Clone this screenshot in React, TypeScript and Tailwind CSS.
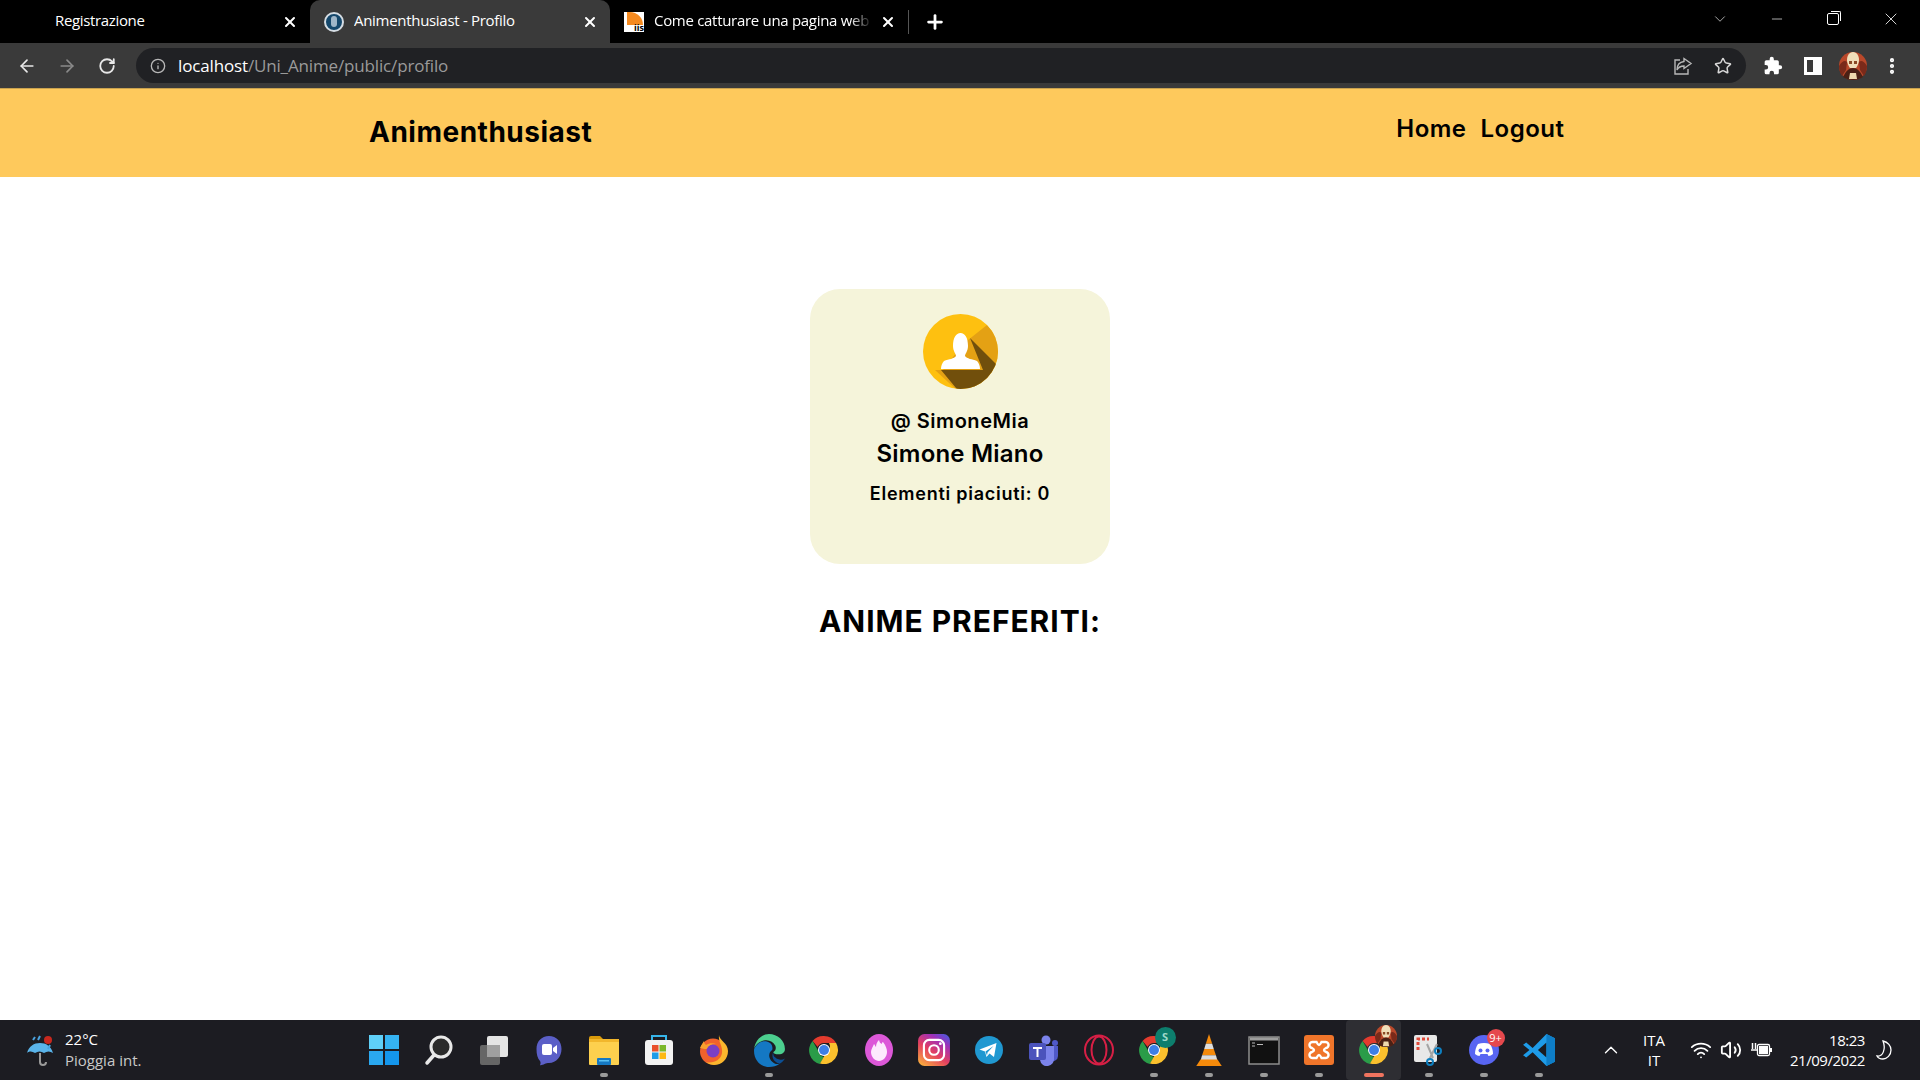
import { ArrowLeft, ArrowRight, ChevronDown, ChevronUp, Info, MoreVertical, Minus, Plus, RotateCw, Star, Volume2, Wifi, X } from 'lucide-react';
import type { ReactNode } from 'react';

const UI = { fontFamily: '"Open Sans", "Noto Sans", sans-serif' };

function Ico({ children, size = 32 }: { children: ReactNode; size?: number }) {
	return (
		<svg width={size} height={size} viewBox="0 0 32 32" fill="none">
			{children}
		</svg>
	);
}

const ChromeLogo = () => (
	<Ico>
		<path d="M16 2a14 14 0 0 1 12.100 7H16a7 7 0 0 0-6.300 4L4.600 7A14 14 0 0 1 16 2z" fill="#e33b2e" />
		<path d="M4.600 7l6 10.500A7 7 0 0 0 16 23l-4 7A14 14 0 0 1 4.600 7z" fill="#2a9c48" />
		<path d="M28.100 9A14 14 0 0 1 12 29.500l6.200-10.700A7 7 0 0 0 21 9z" fill="#fbc02d" />
		<circle cx="16" cy="16" r="6" fill="#fff" />
		<circle cx="16" cy="16" r="5" fill="#3d7fe6" />
	</Ico>
);

const Portrait = ({ size }: { size: number }) => (
	<svg width={size} height={size} viewBox="0 0 28 28">
		<circle cx="14" cy="14" r="14" fill="#b9482a" />
		<path d="M0 14c3-5 6-6 8-4l-1 8-4 6c-2-3-3-6-3-10zM28 14c-3-5-6-6-8-4l1 8 4 6c2-3 3-6 3-10z" fill="#7a2a1a" />
		<path d="M14 0c4 0 6 4 6 8 0 3-2 7-3 8h-6c-1-1-3-5-3-8 0-4 2-8 6-8z" fill="#f0dfba" />
		<path d="M10 9h3v3h-3zM15 9h3v3h-3z" fill="#8a4a25" />
		<path d="M4 25c3-6 6-9 10-9s7 3 10 9c-3 2-6 3-10 3s-7-1-10-3z" fill="#4a2015" />
		<path d="M11 21h6l1 6h-8z" fill="#eed9ae" />
	</svg>
);

const TASKBAR: { key: string; dot?: 'grey' | 'red'; active?: boolean; icon: ReactNode }[] = [
	{
		key: 'start',
		icon: (
			<Ico>
				<rect x="1" y="1" width="14" height="14" fill="#5fd0f8" />
				<rect x="17" y="1" width="14" height="14" fill="#35b3f2" />
				<rect x="1" y="17" width="14" height="14" fill="#2aa8f0" />
				<rect x="17" y="17" width="14" height="14" fill="#1496ec" />
			</Ico>
		),
	},
	{
		key: 'search',
		icon: (
			<Ico>
				<circle cx="18" cy="13" r="10" stroke="#e8e8e8" strokeWidth="3" fill="#2b2b2b" />
				<path d="M11 21l-7 8" stroke="#e8e8e8" strokeWidth="3.500" strokeLinecap="round" />
			</Ico>
		),
	},
	{
		key: 'views',
		icon: (
			<Ico>
				<rect x="2" y="11" width="20" height="20" rx="2" fill="#666" />
				<rect x="9" y="2" width="21" height="21" rx="2" fill="#e4e4e4" />
				<rect x="9" y="11" width="13" height="12" fill="#a0a0a0" />
			</Ico>
		),
	},
	{
		key: 'chat',
		icon: (
			<Ico>
				<path d="M16 2c7.500 0 12.500 5.500 12.500 13S23.500 29 16 29c-1.500 0-3 0-4.500 1-1.500 1-4 1.500-4.500 1 1-1.500 .5-3 0-4C4.500 24.500 3.500 20 3.500 15 3.500 7.500 8.500 2 16 2z" fill="#5b5fc7" />
				<rect x="9" y="10" width="10" height="11" rx="2" fill="#fff" />
				<path d="M20 14l4-3v9l-4-3z" fill="#fff" />
			</Ico>
		),
	},
	{
		key: 'files',
		dot: 'grey',
		icon: (
			<Ico>
				<path d="M1 4a2 2 0 0 1 2-2h9l3 3h-14z" fill="#d99a0b" />
				<rect x="1" y="5" width="30" height="26" rx="1" fill="#fdd04e" />
				<rect x="1" y="5" width="30" height="3" fill="#f2b72c" />
				<rect x="9" y="24" width="14" height="7" rx="1" fill="#1578c2" />
				<rect x="11" y="26" width="10" height="1.500" fill="#59c0f2" />
			</Ico>
		),
	},
	{
		key: 'store',
		icon: (
			<Ico>
				<path d="M9 7V2h14v5" stroke="#36b5ea" strokeWidth="2" />
				<rect x="2" y="6" width="28" height="25" rx="3" fill="#f3f3f3" />
				<rect x="9" y="11" width="6.500" height="6.500" fill="#e9502b" />
				<rect x="16.500" y="11" width="6.500" height="6.500" fill="#7cb82a" />
				<rect x="9" y="18.500" width="6.500" height="6.500" fill="#1e9ce8" />
				<rect x="16.500" y="18.500" width="6.500" height="6.500" fill="#fdb913" />
			</Ico>
		),
	},
	{
		key: 'firefox',
		icon: (
			<Ico>
				<circle cx="15" cy="17.500" r="13" fill="#f0622c" />
				<path d="M21 1c0 5 9 8 9 16 0 8-6 14-14 14-3 0-6-1-8-3 7 2 15-2 16-9 1-7-4-11-3-18z" fill="#fbb62d" />
				<path d="M2 14c1-3 3-5 4-7 0 2 1 3 2 4 3-2 7-2 10-1-5 0-7 3-7 5-3 0-6 0-9-1z" fill="#f9a12e" />
				<circle cx="15" cy="17" r="6.500" fill="#7a3fc4" />
			</Ico>
		),
	},
	{
		key: 'edge',
		dot: 'grey',
		icon: (
			<Ico size={34}>
				<path d="M2 15C3 7 9 1 16 1c8 0 15 6 15 14 0 3-2 5-6 5-3 0-5-1-5-2 2-1 3-3 2-6-2-4-6-6-11-5C7 8 3 11 2 15z" fill="#4ccf8f" />
				<path d="M2 15c3-6 8-8 12-7 4 1 6 4 5 8-3 2-4 6-1 10 2 2 5 4 8 3-3 2-6 3-10 3C8 32 1 25 2 15z" fill="#1478c4" />
				<path d="M20 18c-2 4 0 9 6 11 2-1 4-3 5-5-3 2-7 1-9-1-2-1-2-3-2-5z" fill="#0c4f94" />
			</Ico>
		),
	},
	{ key: 'chrome', icon: <ChromeLogo /> },
	{
		key: 'flame',
		icon: (
			<Ico>
				<ellipse cx="16" cy="16" rx="14" ry="16" fill="#dc58d8" />
				<path d="M16 6c1 4 2 3 3 4 0-1 0-2 1-2 3 4 4 7 4 10 0 5-4 9-8 9s-8-4-8-9c0-3 2-5 3-8 1 1 1 2 2 3 0-3 1-5 3-7z" fill="#fdeafd" />
			</Ico>
		),
	},
	{
		key: 'instagram',
		icon: (
			<Ico size={34}>
				<defs>
					<linearGradient id="ig" x1="0.1" y1="1" x2="0.8" y2="0">
						<stop offset="0" stopColor="#fbb13c" />
						<stop offset="0.45" stopColor="#e4405f" />
						<stop offset="0.8" stopColor="#a02fb8" />
						<stop offset="1" stopColor="#5a51d6" />
					</linearGradient>
				</defs>
				<rect x="1" y="1" width="30" height="30" rx="6" fill="url(#ig)" />
				<rect x="6.500" y="6.500" width="19" height="19" rx="5" stroke="#fff" strokeWidth="2" />
				<circle cx="16" cy="16" r="4.500" stroke="#fff" strokeWidth="2" />
				<circle cx="22" cy="10" r="1.300" fill="#fff" />
			</Ico>
		),
	},
	{
		key: 'telegram',
		icon: (
			<Ico>
				<circle cx="16" cy="16" r="14" fill="#2098d1" />
				<path d="M23.500 9L6.500 15.500l5.500 2 1.500 5.500 3-3.500 4.500 3.500zM12.500 17.500l8-5.500-6 6.500-.5 3z" fill="#fff" />
			</Ico>
		),
	},
	{
		key: 'teams',
		icon: (
			<Ico>
				<circle cx="18" cy="6" r="4.500" fill="#7b83eb" />
				<circle cx="27" cy="9" r="3" fill="#5059c9" />
				<path d="M22 12h8v10a5 5 0 0 1-8 4z" fill="#5059c9" />
				<path d="M11 12h15v12a7 7 0 0 1-14 2z" fill="#7b83eb" />
				<rect x="1" y="9" width="17" height="17" rx="2" fill="#4b53bc" />
				<path d="M5 13h9v2h-3.500v8h-2v-8H5z" fill="#fff" />
			</Ico>
		),
	},
	{
		key: 'opera',
		icon: (
			<Ico>
				<ellipse cx="16" cy="16" rx="14" ry="14.500" stroke="#d71f45" strokeWidth="2" />
				<ellipse cx="16" cy="16" rx="7.500" ry="13.500" stroke="#d71f45" strokeWidth="2" />
			</Ico>
		),
	},
	{
		key: 'chrome2',
		dot: 'grey',
		icon: (
			<div className="relative">
				<ChromeLogo />
				<div className="absolute -right-[6px] -top-[7px] flex h-[21px] w-[21px] items-center justify-center rounded-full bg-[#0d7e6d] text-[11px] font-bold text-[#9fd8c8]" style={UI}>
					S
				</div>
			</div>
		),
	},
	{
		key: 'vlc',
		dot: 'grey',
		icon: (
			<Ico size={34}>
				<path d="M16 1l3 9h-6z" fill="#f58a0b" />
				<path d="M13 10h6l1.500 5h-9z" fill="#ddd" />
				<path d="M11.500 15h9l2 6h-13z" fill="#f58a0b" />
				<path d="M9.500 21h13l1.500 5H8z" fill="#ddd" />
				<path d="M8 25h16l4 6H4z" fill="#f58a0b" />
			</Ico>
		),
	},
	{
		key: 'terminal',
		dot: 'grey',
		icon: (
			<Ico>
				<rect x="1" y="3" width="30" height="27" fill="#111" stroke="#8d8d8d" strokeWidth="1.500" />
				<rect x="2" y="3.500" width="28" height="3" fill="#9d9d9d" />
				<path d="M4 9h3M4 12h3M9 10.500h6" stroke="#bbb" />
			</Ico>
		),
	},
	{
		key: 'xampp',
		dot: 'grey',
		icon: (
			<Ico>
				<rect x="1" y="1" width="30" height="30" rx="3" fill="#f0752a" />
				<path d="M10 8h3.500c1 2 1.500 3 2.500 3s1.500-1 2.500-3H22a3 3 0 0 1 1 6c-1 .5-2 1-2 2s1 1.500 2 2a3 3 0 0 1-1 6h-3.500c-1-2-1.500-3-2.500-3s-1.500 1-2.500 3H10a3 3 0 0 1-1-6c1-.5 2-1 2-2s-1-1.500-2-2a3 3 0 0 1 1-6z" stroke="#fff" strokeWidth="2.400" />
			</Ico>
		),
	},
	{
		key: 'chrome-active',
		dot: 'red',
		active: true,
		icon: (
			<div className="relative">
				<ChromeLogo />
				<div className="absolute -right-[7px] -top-[9px]">
					<Portrait size={22} />
				</div>
			</div>
		),
	},
	{
		key: 'snip',
		dot: 'grey',
		icon: (
			<Ico>
				<rect x="1" y="1" width="23" height="27" rx="2" fill="#e8e8e8" />
				<path d="M5 16V5h11" stroke="#e04a3a" strokeWidth="3" strokeDasharray="3 2" />
				<path d="M14 10l6 14M24 10l-8 16" stroke="#a5a5a5" strokeWidth="2" />
				<circle cx="25" cy="17" r="3" stroke="#0e7fc0" strokeWidth="2" />
				<circle cx="17" cy="28" r="3" stroke="#0e7fc0" strokeWidth="2" />
			</Ico>
		),
	},
	{
		key: 'discord',
		dot: 'grey',
		icon: (
			<div className="relative">
				<Ico>
					<circle cx="16" cy="16" r="15" fill="#5865f2" />
					<path d="M10 10c4-1.500 8-1.500 12 0 2 3 3 6 3 10-1.500 1-3 2-4.500 2l-1-2h-7l-1 2c-1.500 0-3-1-4.500-2 0-4 1-7 3-10z" fill="#fff" />
					<circle cx="12.500" cy="16.500" r="2" fill="#5865f2" />
					<circle cx="19.500" cy="16.500" r="2" fill="#5865f2" />
				</Ico>
				<div className="absolute -right-[5px] -top-[5px] flex h-[18px] w-[18px] items-center justify-center rounded-full bg-[#e5484d] text-[11px] text-white" style={UI}>
					9+
				</div>
			</div>
		),
	},
	{
		key: 'vscode',
		dot: 'grey',
		icon: (
			<Ico size={34}>
				<path d="M23 1l8 4v22l-8 4-13-13-6 5-3-2 6-5-6-5 3-2 6 5z" fill="#1e9be8" />
				<path d="M23 9l-8 7 8 7z" fill="#1a1b20" />
				<path d="M23 1l8 4v22l-8 4z" fill="#0e7dc6" />
			</Ico>
		),
	},
];

function Tab({ title, active, icon, fade }: { title: string; active?: boolean; icon?: ReactNode; fade?: boolean }) {
	return (
		<div className={`flex h-full items-center rounded-t-[10px] pl-[14px] pr-[12px] ${active ? 'w-[300px] bg-[#3a3a3a]' : 'w-[298px]'}`}>
			{icon && <div className="mr-[10px] shrink-0">{icon}</div>}
			<span className={`mb-[2px] min-w-0 flex-1 overflow-hidden whitespace-nowrap text-[15px] tracking-[-0.3px] text-white ${fade ? '[mask-image:linear-gradient(to_right,black_90%,transparent)]' : ''}`}>{title}</span>
			<X size={16} strokeWidth={3} className="ml-[8px] shrink-0 text-white" />
		</div>
	);
}

export default function App() {
	return (
		<div className="flex h-[1080px] w-[1920px] flex-col overflow-hidden bg-white text-black">
			{/* browser chrome */}
			<div className="flex h-[43px] items-center bg-black" style={UI}>
				<div className="flex h-[43px] w-[310px] items-center pl-[55px] pr-[12px]">
					<span className="mb-[2px] flex-1 text-[15px] tracking-[-0.35px] text-white">Registrazione</span>
					<X size={16} strokeWidth={3} className="text-white" />
				</div>
				<Tab
					title="Animenthusiast - Profilo"
					active
					icon={
						<div className="flex h-[20px] w-[20px] items-center justify-center rounded-full border-2 border-[#d5dde4] bg-[#14476b]">
							<div className="h-[11px] w-[6px] rounded-full bg-[#9fb6c8]" />
						</div>
					}
				/>
				<Tab
					title="Come catturare una pagina web s"
					fade
					icon={
						<div className="relative h-[20px] w-[20px] bg-white">
							<div className="absolute left-[3px] top-0 h-[13px] w-[16px] rounded-tr-full bg-[#f58a1f]" />
							<span className="absolute bottom-0 right-0 text-[9px] font-bold leading-[9px] text-black">iis</span>
						</div>
					}
				/>
				<div className="h-[24px] w-px bg-[#555]" />
				<Plus size={22} strokeWidth={3} className="ml-[15px] text-white" />
				<div className="mb-[6px] ml-auto flex items-center text-white">
					<ChevronDown size={18} strokeWidth={1} className="mr-[40px] text-[#ddd]" />
					<Minus size={16} strokeWidth={1} className="mr-[42px]" />
					<div className="relative mr-[42px] h-[12px] w-[12px] rounded-[2px] border border-white">
						<div className="absolute -right-[3px] -top-[3px] h-[10px] w-[10px] rounded-tr-[2px] border-r border-t border-white" />
					</div>
					<X size={20} strokeWidth={1} className="mr-[19px]" />
				</div>
			</div>
			<div className="flex h-[45px] items-center bg-[#3a3a3a] pl-[17px]" style={UI}>
				<ArrowLeft size={20} className="text-[#e8e8e8]" />
				<ArrowRight size={20} className="ml-[20px] text-[#8a8a8a]" />
				<RotateCw size={18} strokeWidth={2.4} className="ml-[21px] text-[#e8e8e8]" />
				<div className="ml-[20px] flex h-[35px] w-[1610px] items-center rounded-full bg-[#202124] pl-[14px]">
					<Info size={16} className="text-[#b8b8b8]" />
					<span className="ml-[12px] text-[17px] tracking-[-0.15px] text-white">localhost</span>
					<span className="text-[17px] tracking-[-0.15px] text-[#9a9a9a]">/Uni_Anime/public/profilo</span>
					<svg width="20" height="20" viewBox="0 0 20 20" fill="none" stroke="#b8b8b8" strokeWidth="1.400" className="ml-auto">
						<path d="M7 4H2v14h13v-5" />
						<path d="M11 2.500l7 5-7 5V10C8 10 5.500 11 4 14c0-5 3-8 7-8.500z" />
					</svg>
					<Star size={18} strokeWidth={2} className="ml-[21px] mr-[14px] text-[#d8d8d8]" />
				</div>
				<svg width="20" height="20" viewBox="0 0 24 24" className="ml-[17px]" fill="#fff">
					<path d="M20.500 11H19V7a2 2 0 0 0-2-2h-4V3.500a2.500 2.500 0 0 0-5 0V5H4a2 2 0 0 0-2 2v3.800h1.500a2.700 2.700 0 0 1 0 5.400H2V20a2 2 0 0 0 2 2h3.800v-1.500a2.700 2.700 0 0 1 5.400 0V22H17a2 2 0 0 0 2-2v-4h1.500a2.500 2.500 0 0 0 0-5z" />
				</svg>
				<div className="ml-[21px] flex h-[18px] w-[18px] border-[3px] border-white bg-[#3a3a3a]">
					<div className="ml-auto h-full w-[6px] bg-white" />
				</div>
				<div className="ml-[17px]">
					<Portrait size={28} />
				</div>
				<MoreVertical size={20} strokeWidth={3} className="ml-[15px] text-white" />
			</div>
			<div className="h-[1px] bg-[#c9a24f]" />

			{/* site */}
			<header className="flex h-[88px] items-start bg-[#fec95c] pl-[369px]" style={{ fontFamily: 'Inter, sans-serif' }}>
				<h1 className="mt-[25px] text-[28px] font-bold leading-[36px] tracking-[0.5px]">Animenthusiast</h1>
				<nav className="ml-[804px] mt-[24px] flex gap-[14px] text-[24px] font-semibold leading-[32px] tracking-[0.5px]">
					<a>Home</a>
					<a>Logout</a>
				</nav>
			</header>
			<main className="flex flex-1 flex-col items-center" style={{ fontFamily: 'Inter, sans-serif' }}>
				<section className="mt-[112px] flex h-[275px] w-[300px] flex-col items-center rounded-[30px] bg-[#f5f4da] pt-[25px]">
					<svg width="75" height="75" viewBox="0 0 75 75">
						<defs>
							<clipPath id="avatar">
								<circle cx="37.500" cy="37.500" r="37.500" />
							</clipPath>
						</defs>
						<g clipPath="url(#avatar)">
							<rect width="75" height="75" fill="#fec010" />
							<path d="M64 11L80 30V80H38L12 56H20L40 30z" fill="#e4a114" />
							<path d="M47 24L78 55V80H38L18 56H60z" fill="#714f0c" />
						</g>
						<path d="M18 55c0-3 1-6 3-8 5-2 10-2 12-5 0-2-3-5-3-10 0-8 3-13 7.500-13s7.500 5 7.500 13c0 5-3 8-3 10 2 3 7 3 12 5 2 2 3 5 3 8z" fill="#fff" />
					</svg>
					<p className="mt-[19px] text-[20px] font-semibold leading-[26px] tracking-[0.55px]">@ SimoneMia</p>
					<p className="mt-[6px] text-[24px] font-semibold leading-[28px] tracking-[0.2px]">Simone Miano</p>
					<p className="mt-[14px] text-[18px] font-semibold leading-[24px] tracking-[0.75px]">Elementi piaciuti: 0</p>
				</section>
				<h2 className="mt-[39px] text-[30px] font-bold leading-[36px] tracking-[0.95px]">ANIME PREFERITI:</h2>
			</main>

			{/* taskbar */}
			<footer className="flex h-[60px] items-center bg-[#1c1c22] text-white" style={UI}>
				<div className="flex w-[356px] items-center pl-[25px]">
					<svg width="32" height="34" viewBox="0 0 32 34" fill="none">
						<path d="M2 20c2-7 7-10 13-10s11 3 13 10c-3-2-6-2-9 0-3-2-6-2-9 0-3-2-6-2-8 0z" fill="#5ab4ea" />
						<path d="M15 20v9a3 3 0 0 0 6 0" stroke="#9a9a9a" strokeWidth="2" />
						<path d="M15 3l-2 4M25 12l-2 4M10 4l-2 3" stroke="#4aa3e0" strokeWidth="2" />
						<circle cx="23" cy="7" r="4" fill="#c8281e" />
					</svg>
					<div className="ml-[8px] text-[15px] leading-[21px]">
						<div>22°C</div>
						<div className="text-[#c9c9c9]">Pioggia int.</div>
					</div>
				</div>
				<div className="flex">
					{TASKBAR.map((item) => (
						<div key={item.key} className={`relative flex h-[60px] w-[55px] items-center justify-center ${item.active ? 'rounded-[4px] bg-[#2e2e33]' : ''}`}>
							{item.icon}
							{item.dot && <div className={`absolute bottom-[3px] h-[4px] rounded-full ${item.dot === 'red' ? 'w-[20px] bg-[#f0745f]' : 'w-[8px] bg-[#9a9a9a]'}`} />}
						</div>
					))}
				</div>
				<ChevronUp size={22} strokeWidth={1.5} className="ml-[34px]" />
				<div className="ml-[20px] w-[24px] text-center text-[15px] leading-[20px]">
					<div>ITA</div>
					<div>IT</div>
				</div>
				<Wifi size={22} className="ml-[24px]" />
				<Volume2 size={22} className="ml-[8px]" />
				<svg width="22" height="18" viewBox="0 0 22 18" fill="none" className="ml-[8px]">
					<rect x="7.500" y="3.500" width="12" height="11" rx="1.500" stroke="#fff" strokeWidth="1.300" />
					<rect x="9" y="5" width="9" height="8" fill="#fff" />
					<rect x="20" y="7" width="2" height="4" fill="#fff" />
					<path d="M1 9h6M2.500 2v6M5.500 2v6" stroke="#fff" strokeWidth="1.500" />
				</svg>
				<div className="ml-[15px] w-[78px] text-right text-[15px] leading-[20px] tracking-[-0.45px]">
					<div>18:23</div>
					<div>21/09/2022</div>
				</div>
				<svg width="18" height="22" viewBox="0 0 18 20" fill="none" className="ml-[10px]">
					<path d="M8 1c5 1 8 5 8 9 0 5-4 9-8 9-3 0-5-1-6-3 6 1 9-7 6-15z" stroke="#fff" strokeWidth="1.300" />
				</svg>
			</footer>
		</div>
	);
}
